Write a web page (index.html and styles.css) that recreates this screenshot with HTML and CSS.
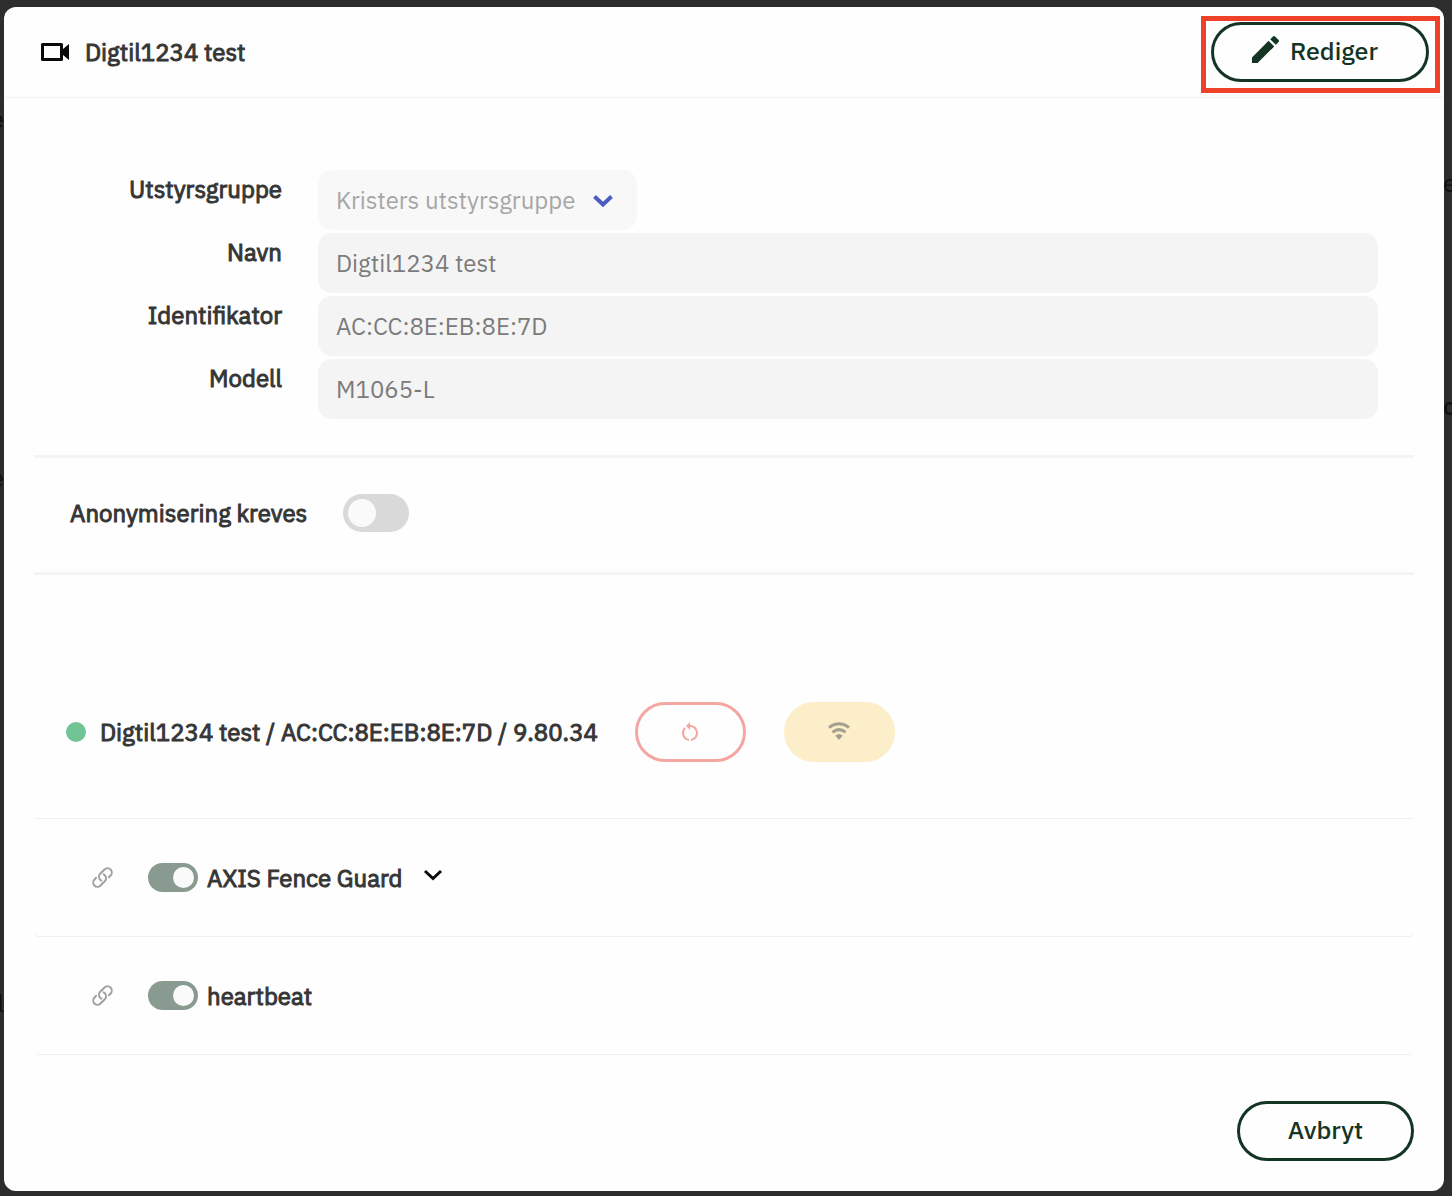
FILE: index.html
```html
<!DOCTYPE html>
<html lang="nb">
<head>
<meta charset="utf-8">
<meta name="viewport" content="width=device-width, initial-scale=1">
<title>Digtil1234 test</title>
<link rel="stylesheet" href="styles.css">
</head>
<body>
<div class="backdrop" aria-hidden="true">
  <span class="ghost ghost-left ghost-a">e</span>
  <span class="ghost ghost-left ghost-b">e</span>
  <span class="ghost ghost-left ghost-c">el</span>
  <span class="ghost ghost-right ghost-d">e</span>
  <span class="ghost ghost-right ghost-e">o</span>
</div>
<main class="dialog" role="dialog" aria-labelledby="dialog-title">
  <header class="dialog-header">
    <div class="heading">
      <svg class="icon-camera" viewBox="0 0 28 20" aria-hidden="true"><path fill-rule="evenodd" d="M1.500 1H20.500Q22 1 22 2.500V7L28 2V18L22 13V17.500Q22 19 20.500 19H1.500Q0 19 0 17.500V2.500Q0 1 1.500 1ZM3 4V16H19V4Z"/></svg>
      <h1 class="dialog-title" id="dialog-title">Digtil1234 test</h1>
    </div>
    <div class="highlight">
      <button class="btn btn-edit" type="button">
        <svg class="icon-pencil" viewBox="3 3 18 18" aria-hidden="true"><path d="M3 17.250V21h3.750L17.810 9.940l-3.750-3.750L3 17.250zM20.710 7.040a1 1 0 0 0 0-1.410l-2.340-2.340a1 1 0 0 0-1.410 0l-1.830 1.830 3.750 3.750 1.830-1.830z"/></svg>
        Rediger
      </button>
    </div>
  </header>

  <div class="dialog-body">
    <form class="device-form">
      <label class="field-label" for="group">Utstyrsgruppe</label>
      <div class="select-wrap">
        <select class="field field-select" id="group" disabled>
          <option>Kristers utstyrsgruppe</option>
        </select>
        <svg class="select-arrow" viewBox="0 0 20 14" aria-hidden="true"><path d="M1.500 2.500L10 10.500L18.500 2.500"/></svg>
      </div>
      <label class="field-label" for="name">Navn</label>
      <input class="field" id="name" type="text" value="Digtil1234 test" disabled>
      <label class="field-label" for="identifier">Identifikator</label>
      <input class="field" id="identifier" type="text" value="AC:CC:8E:EB:8E:7D" disabled>
      <label class="field-label" for="model">Modell</label>
      <input class="field" id="model" type="text" value="M1065-L" disabled>
    </form>

    <section class="anonymise">
      <label class="anonymise-label" for="anonymise">Anonymisering kreves</label>
      <input class="toggle toggle-large" id="anonymise" type="checkbox" role="switch" disabled>
    </section>

    <section class="device-status">
      <span class="status-dot"></span>
      <span class="status-text">Digtil1234 test / AC:CC:8E:EB:8E:7D / 9.80.34</span>
      <button class="btn btn-icon btn-restart" type="button" aria-label="Start på nytt" disabled>
        <svg class="icon-restart" viewBox="4 2 16 19" aria-hidden="true"><path d="M12 5V2L8 6l4 4V7c3.310 0 6 2.690 6 6 0 2.970-2.170 5.430-5 5.910v2.020c3.950-.490 7-3.850 7-7.930 0-4.420-3.580-8-8-8zm-6 8c0-1.650.670-3.150 1.760-4.240L6.340 7.340C4.900 8.790 4 10.790 4 13c0 4.080 3.050 7.440 7 7.930v-2.020c-2.830-.480-5-2.940-5-5.910z"/></svg>
      </button>
      <button class="btn btn-icon btn-wifi" type="button" aria-label="Nettverk" disabled>
        <svg class="icon-wifi" viewBox="0 0 22 18" aria-hidden="true"><path class="wifi-arc" d="M1 5.500Q11-2 21 5.500M4.500 10.300Q11 5 17.500 10.300"/><path d="M7.300 13.700Q11 10.500 14.700 13.700L11 18Z"/></svg>
      </button>
    </section>

    <ul class="app-list">
      <li class="app-row">
        <svg class="icon-link" viewBox="1 1 22 22" aria-hidden="true"><path d="M13.190 8.688a4.500 4.500 0 0 1 1.242 7.244l-4.500 4.500a4.500 4.500 0 0 1-6.364-6.364l1.757-1.757m13.350-.622 1.757-1.757a4.500 4.500 0 0 0-6.364-6.364l-4.500 4.500a4.500 4.500 0 0 0 1.242 7.244"/></svg>
        <input class="toggle" id="fence-guard" type="checkbox" role="switch" checked disabled>
        <label class="app-name" for="fence-guard">AXIS Fence Guard</label>
        <button class="expand" type="button" aria-label="Vis mer"><svg class="icon-expand" viewBox="0 0 18 12" aria-hidden="true"><path d="M1 2L9 9.500L17 2"/></svg></button>
      </li>
      <li class="app-row">
        <svg class="icon-link" viewBox="1 1 22 22" aria-hidden="true"><path d="M13.190 8.688a4.500 4.500 0 0 1 1.242 7.244l-4.500 4.500a4.500 4.500 0 0 1-6.364-6.364l1.757-1.757m13.350-.622 1.757-1.757a4.500 4.500 0 0 0-6.364-6.364l-4.500 4.500a4.500 4.500 0 0 0 1.242 7.244"/></svg>
        <input class="toggle" id="heartbeat" type="checkbox" role="switch" checked disabled>
        <label class="app-name" for="heartbeat">heartbeat</label>
      </li>
    </ul>

    <footer class="dialog-footer">
      <button class="btn btn-cancel" type="button">Avbryt</button>
    </footer>
  </div>
</main>
</body>
</html>
```

FILE: styles.css
```css
* {
  box-sizing: border-box;
}

body {
  position: relative;
  margin: 0;
  min-height: 100vh;
  padding: 7px 8px 5px 4px;
  background: #2d2d2d;
  color: #363636;
  font-family: "IBM Plex Sans", Roboto, "Liberation Sans", sans-serif;
  font-size: 24px;
  font-weight: 400;
  line-height: 38px;
  overflow-x: hidden;
}

svg {
  display: block;
  flex: none;
  fill: currentColor;
  overflow: visible;
}

button,
input,
select {
  font: inherit;
}

/* Page text showing at the edges behind the dialog */
.backdrop {
  position: absolute;
  inset: 0;
  overflow: hidden;
  color: #111;
}

.ghost {
  position: absolute;
}

.ghost-left {
  right: calc(100% - 4px);
}

.ghost-right {
  left: calc(100% - 9px);
}

.ghost-a { top: 100px; font-weight: 500; }
.ghost-b { top: 459px; }
.ghost-c { top: 984px; }
.ghost-d { top: 164px; }
.ghost-e { top: 387px; font-weight: 500; }

.dialog {
  position: relative;
  min-height: calc(100vh - 12px);
  border-radius: 12px;
  background: #fefefe;
}

.dialog-header {
  display: flex;
  align-items: flex-start;
  justify-content: space-between;
  padding: 9px 4px 4px 37px;
  border-bottom: 1px solid #f2f2f2;
}

.heading {
  display: flex;
  align-items: center;
  gap: 16px;
  height: 71px;
}

.icon-camera {
  width: 28px;
  height: 20px;
  color: #0a0a0a;
}

.dialog-title,
.field-label,
.anonymise-label,
.status-text,
.app-name {
  -webkit-text-stroke: 1px currentColor;
}

.dialog-title {
  margin: 0;
  font-size: 24px;
  font-weight: 400;
}

.highlight {
  padding: 1px 6px 6px 5px;
  border: 5px solid #ee4128;
}

.btn {
  display: flex;
  align-items: center;
  justify-content: center;
  height: 60px;
  padding: 0 0 2px;
  border: 3px solid #143524;
  border-radius: 30px;
  background: transparent;
  color: #143524;
  font-size: 25px;
  font-weight: 500;
}

.btn-edit {
  gap: 11px;
  width: 218px;
  padding-right: 10px;
}

.icon-pencil {
  width: 27px;
  height: 27px;
  margin-bottom: 3px;
}

.dialog-body {
  padding: 72px 30px 30px;
}

.device-form {
  display: grid;
  grid-template-columns: 248px 1fr;
  gap: 3px 36px;
  padding: 0 36px 36px 0;
  border-bottom: 3px solid #f4f4f4;
}

.field-label {
  text-align: right;
}

.field {
  width: 100%;
  height: 60px;
  padding: 0 18px;
  border: 0;
  border-radius: 14px;
  background: #f4f4f4;
  color: #7b7b7b;
  opacity: 1;
}

.select-wrap {
  position: relative;
  width: 319px;
}

.field-select {
  appearance: none;
  background: #f8f8f8;
  color: #a6a6a6;
}

.select-arrow {
  position: absolute;
  top: 24px;
  right: 24px;
  width: 20px;
  height: 14px;
  fill: none;
  stroke: #4b5cc4;
  stroke-width: 4;
  pointer-events: none;
}

.anonymise {
  display: flex;
  align-items: center;
  gap: 36px;
  height: 117px;
  padding: 0 36px 4px;
  border-bottom: 3px solid #f4f4f4;
}

.toggle {
  display: flex;
  align-items: center;
  justify-content: flex-end;
  flex: none;
  appearance: none;
  width: 50px;
  height: 29px;
  margin: 0;
  padding: 4px;
  border-radius: 19px;
  background: #899b90;
}

.toggle::before {
  content: "";
  width: 21px;
  height: 21px;
  border-radius: 50%;
  background: #fafafa;
}

.toggle-large {
  justify-content: flex-start;
  width: 66px;
  height: 38px;
  padding: 5px;
  background: #d9d9d9;
}

.toggle-large::before {
  width: 28px;
  height: 28px;
}

.device-status {
  display: flex;
  align-items: center;
  padding: 127px 32px 56px;
}

.status-dot {
  width: 20px;
  height: 20px;
  margin-right: 14px;
  border-radius: 50%;
  background: #70c496;
}

.status-text {
  margin-right: 37px;
}

.btn-icon {
  width: 111px;
}

.btn-restart {
  margin-right: 38px;
  border-color: #f4a7a0;
  color: #f4a7a0;
}

.icon-restart {
  width: 16px;
  height: 19px;
}

.btn-wifi {
  border: 0;
  background: #fceec9;
  color: #a3a090;
}

.icon-wifi {
  width: 22px;
  height: 18px;
}

.wifi-arc {
  fill: none;
  stroke: currentColor;
  stroke-width: 3;
}

.app-list {
  margin: 0;
  padding: 0;
  border-top: 1px solid #f0f0f0;
  list-style: none;
}

.app-row {
  display: flex;
  align-items: center;
  height: 118px;
  padding-left: 58px;
  border-bottom: 1px solid #f0f0f0;
  border-radius: 5px;
}

.icon-link {
  width: 21px;
  height: 21px;
  margin-right: 35px;
  fill: none;
  stroke: #a0a0a0;
  stroke-width: 2;
  stroke-linecap: round;
}

.app-name {
  margin-left: 9px;
}

.expand {
  margin-left: 21px;
  padding: 0 0 5px;
  border: 0;
  background: transparent;
  color: #0a0a0a;
}

.icon-expand {
  width: 18px;
  height: 12px;
  fill: none;
  stroke: currentColor;
  stroke-width: 3;
}

.dialog-footer {
  display: flex;
  justify-content: flex-end;
  padding-top: 46px;
}

.btn-cancel {
  width: 177px;
}
```
